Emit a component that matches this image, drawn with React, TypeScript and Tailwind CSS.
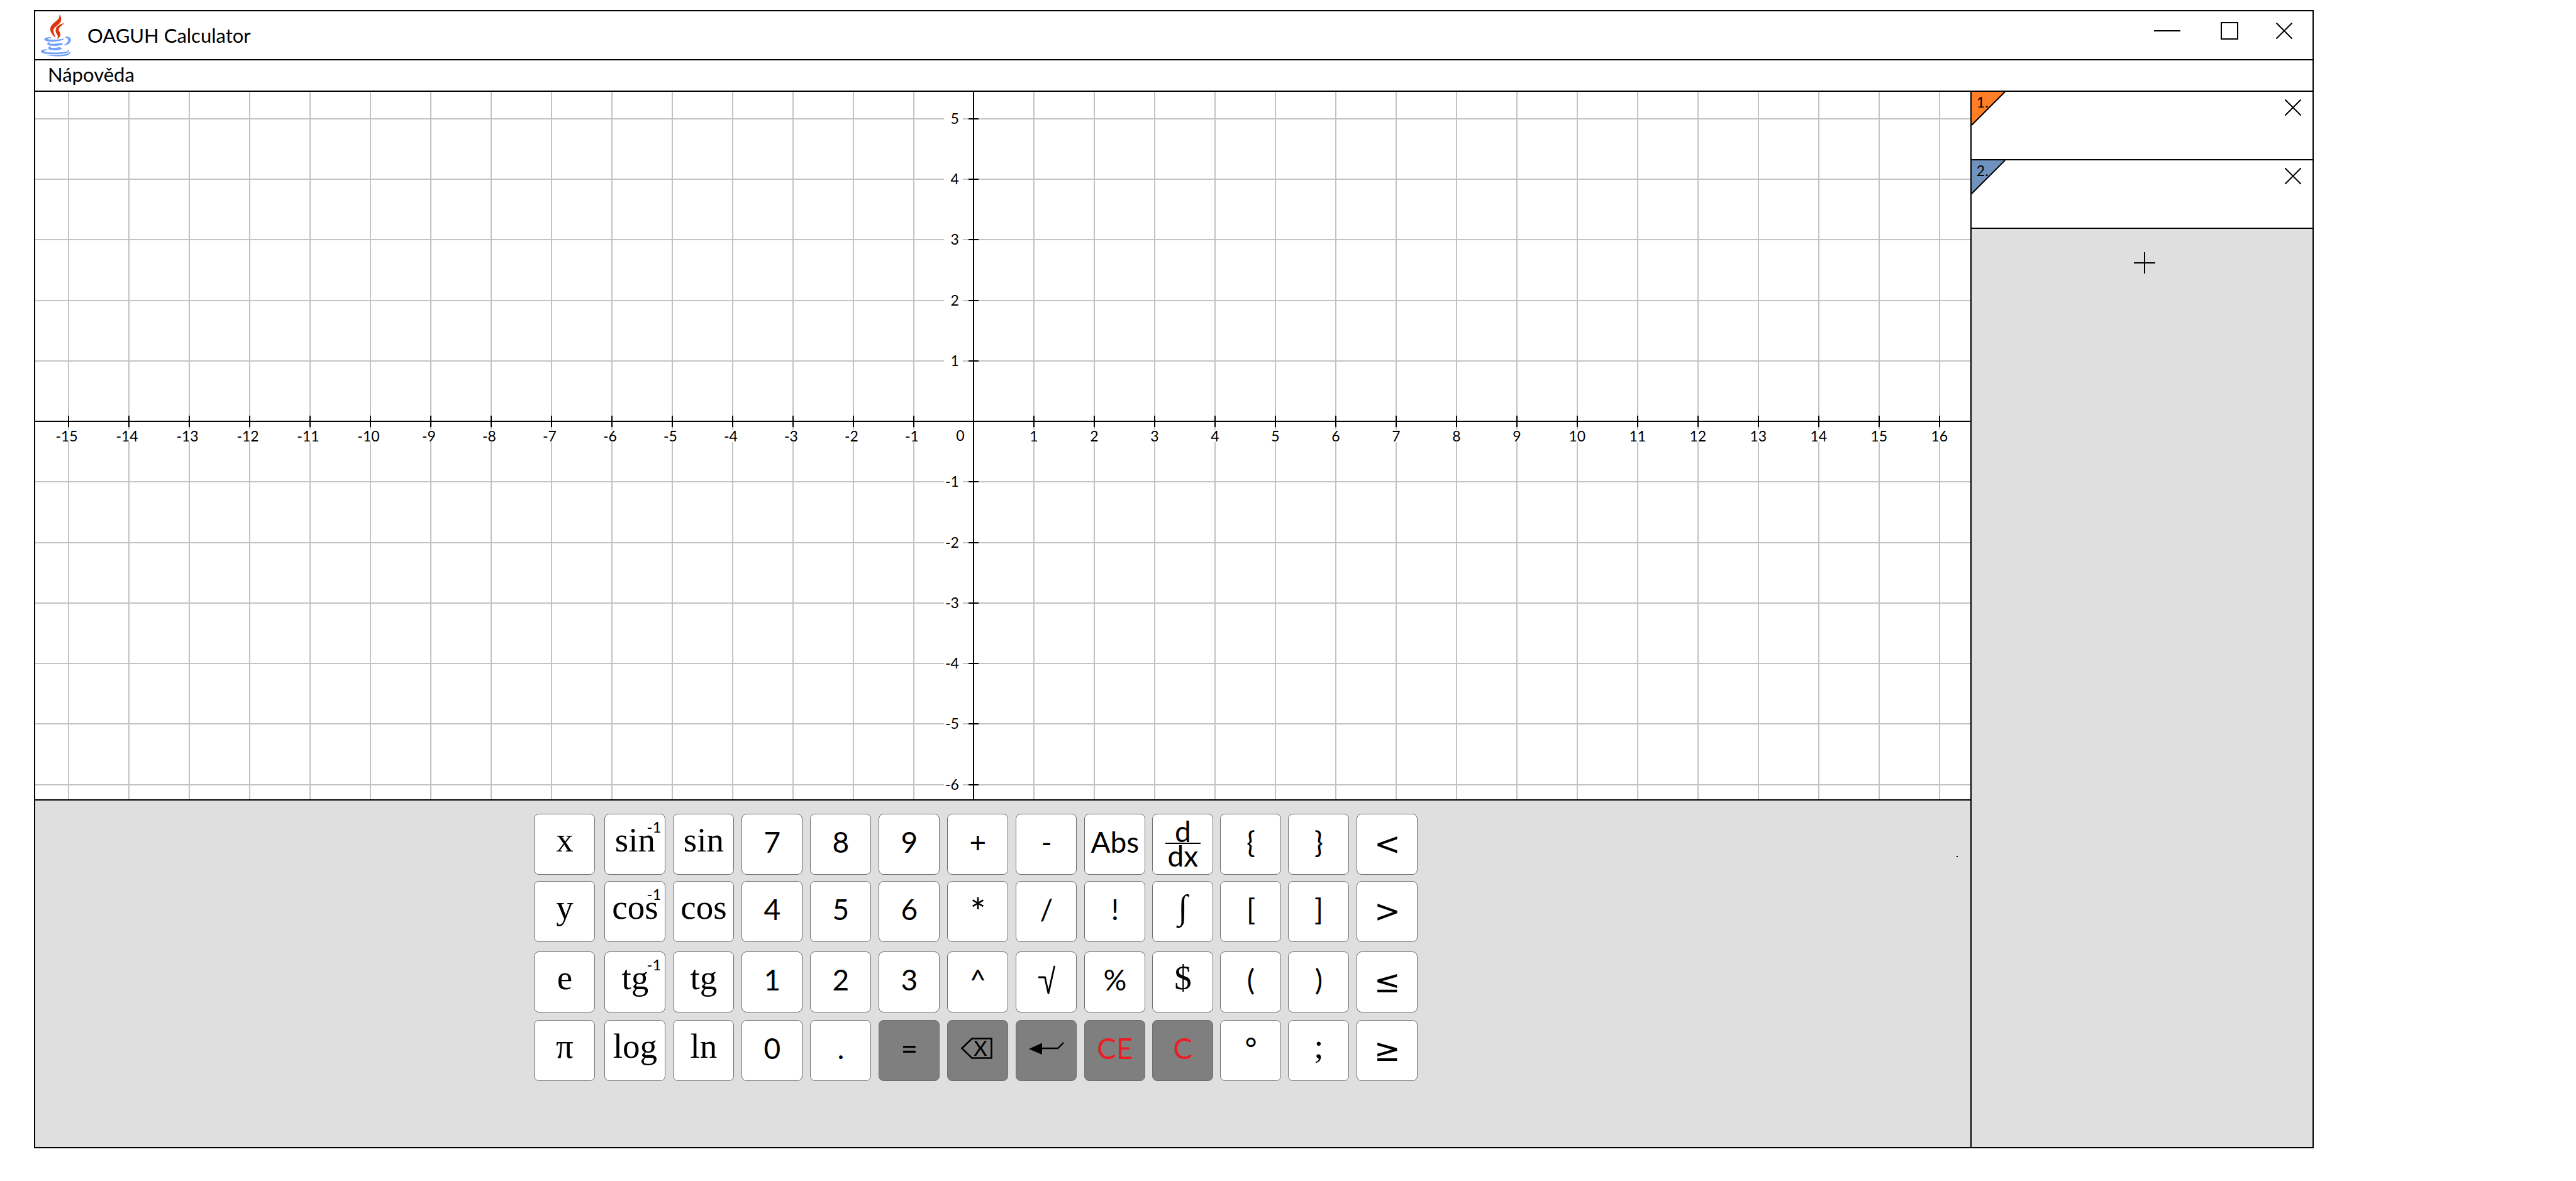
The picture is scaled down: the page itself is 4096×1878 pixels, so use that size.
import React from "react";

const PLOT_W = 3077;
const PLOT_H = 1125;
const ORIGIN_X = 1492;
const ORIGIN_Y = 524;
const STEP = 96;

const range = (from: number, to: number) =>
  Array.from({ length: to - from + 1 }, (_, i) => from + i);

const xOf = (k: number) => {
  if (k === 0) return ORIGIN_X;
  return k < 0 ? 1397 + (k + 1) * STEP : 1588 + (k - 1) * STEP;
};
const yOf = (k: number) => Math.round(ORIGIN_Y - k * 96.25);

const X_TICKS = range(-15, 16).filter((k) => k !== 0);
const Y_TICKS = range(-6, 5).filter((k) => k !== 0);

function Plot() {
  return (
    <svg
      viewBox={`0 0 ${PLOT_W} ${PLOT_H}`}
      className="block h-auto w-full bg-white"
      role="img"
      aria-label="Graf"
    >
      <g fill="#c3c3c3" shapeRendering="crispEdges">
        {X_TICKS.map((k) => (
          <rect key={k} x={xOf(k) - 1} y={0} width={2} height={PLOT_H} />
        ))}
        {Y_TICKS.map((k) => (
          <rect key={k} x={0} y={yOf(k) - 1} width={PLOT_W} height={2} />
        ))}
      </g>
      <g fill="#ffffff" shapeRendering="crispEdges">
        {X_TICKS.map((k) => (
          <rect key={k} x={xOf(k) - 16} y={537} width={32} height={20} />
        ))}
        {Y_TICKS.map((k) => (
          <rect key={k} x={1445} y={yOf(k) - 11} width={30} height={22} />
        ))}
      </g>
      <g fill="#000000" shapeRendering="crispEdges">
        <rect x={0} y={ORIGIN_Y - 1} width={PLOT_W} height={2} />
        <rect x={ORIGIN_X - 1} y={0} width={2} height={PLOT_H} />
        {X_TICKS.map((k) => (
          <rect key={k} x={xOf(k) - 1} y={ORIGIN_Y - 9} width={2} height={18} />
        ))}
        {Y_TICKS.map((k) => (
          <rect key={k} x={ORIGIN_X - 8} y={yOf(k) - 1} width={16} height={2} />
        ))}
      </g>
      <g className="text-[23px]" fill="#000000">
        {X_TICKS.map((k) => (
          <text key={k} x={k < 0 ? xOf(k) - 3 : xOf(k)} y={556} textAnchor="middle">
            {k}
          </text>
        ))}
        <text x={1471} y={555} textAnchor="middle">
          0
        </text>
        {Y_TICKS.map((k) => (
          <text key={k} x={1469} y={yOf(k) + 8} textAnchor="end">
            {k}
          </text>
        ))}
      </g>
    </svg>
  );
}

function JavaLogo() {
  return (
    <svg viewBox="60 20 270 374" className="h-[67px] w-[48px]" aria-hidden="true">
      <g fill="#dc360c">
        <path d="M229 21C240 36 244 55 241 72C236 96 216 110 197 124C178 138 170 153 173 171C176 190 184 205 190 219L186 222C164 203 147 180 144 157C142 131 156 111 178 93C205 72 228 58 226 23Z" />
        <path d="M263 98L264 103C247 114 228 129 221 145C215 158 224 168 231 180C240 197 236 213 211 237L208 235C213 217 212 207 203 195C193 181 188 164 194 146C203 121 231 106 263 98Z" />
      </g>
      <g fill="#73a1fb">
        <path d="M152 222L153 228C140 229 126 232 122 236C120 240 132 242 150 243C190 245 225 243 266 234C267 239 263 243 255 247C225 260 172 267 128 261C101 257 86 247 91 237C97 225 127 220 152 222Z" />
        <path d="M273 225C282 217 298 215 312 221C328 228 333 245 326 260C317 280 292 292 268 294L267 290C286 278 299 267 303 253C306 238 297 227 273 225Z" />
        <path d="M135 267L140 270C134 276 138 280 150 280C178 281 208 278 238 271C245 275 246 280 257 282L257 287C227 297 190 302 153 299C127 297 115 288 117 278C119 270 127 267 135 267Z" />
        <path d="M147 304L149 308C144 313 148 317 163 317C187 318 210 314 231 309C236 315 241 320 252 323C246 330 236 333 222 336C192 341 158 340 140 334C127 330 123 320 127 312C130 307 138 303 147 304Z" />
        <path d="M118 330L120 334C105 337 94 341 91 346C88 352 108 357 140 358C188 360 248 357 289 350C301 347 304 342 301 334L305 333C313 339 314 347 308 353C292 369 218 376 163 374C104 373 61 364 60 350C59 337 88 330 118 330Z" />
        <path d="M322 352L325 357C318 375 303 386 280 389C230 396 160 393 114 383L115 378C165 383 232 382 273 375C300 370 313 362 322 352Z" />
      </g>
    </svg>
  );
}

function Cross() {
  return (
    <svg viewBox="0 0 26 26" className="size-[26px]" stroke="#000" strokeWidth="2" strokeLinecap="round" aria-hidden="true">
      <path d="M1 1L25 25M25 1L1 25" />
    </svg>
  );
}

function TitleBar() {
  return (
    <header className="flex h-[78px] items-center border-b-2 border-black pr-8 pl-[9px]">
      <JavaLogo />
      <h1 className="ml-[26px] flex-1 text-[31px] leading-[38px]">OAGUH Calculator</h1>
      <div className="flex items-center pb-[14px]">
        <button type="button" aria-label="Minimalizovat" className="flex h-7 w-[42px] items-center">
          <span className="h-[2px] w-full bg-black" />
        </button>
        <button type="button" aria-label="Maximalizovat" className="ml-16 size-7 border-2 border-black" />
        <button type="button" aria-label="Zavřít" className="ml-[60px]">
          <Cross />
        </button>
      </div>
    </header>
  );
}

function FunctionRow({ n, fill }: { n: number; fill: string }) {
  return (
    <div className="relative flex h-[109px] items-start justify-end border-b-2 border-black bg-white">
      <svg viewBox="0 0 54 54" className="absolute top-0 left-0 size-[54px]" aria-hidden="true">
        <path d="M0 0H53L0 53Z" fill={fill} />
        <path d="M53 0L0 53" stroke="#000" strokeWidth="2" />
      </svg>
      <label htmlFor={`fn-${n}`} className="absolute top-[2px] left-2 text-[23px] leading-[28px]">
        {n}.
      </label>
      <input id={`fn-${n}`} type="text" className="h-full min-w-0 flex-1 bg-transparent pl-16 text-[31px] outline-none" />
      <button type="button" aria-label={`Odstranit funkci ${n}`} className="mt-3 mr-[18px]">
        <Cross />
      </button>
    </div>
  );
}

function RootIcon() {
  return (
    <svg viewBox="0 0 28 46" className="h-[46px] w-[28px]" fill="none" stroke="#000" strokeWidth="2.8" strokeLinecap="round" strokeLinejoin="round" aria-hidden="true">
      <path d="M2 19H11.500L17 44.500L26.500 2" />
    </svg>
  );
}

function BackspaceIcon() {
  return (
    <svg viewBox="0 0 50 34" className="mr-1 h-[34px] w-[50px] overflow-visible" aria-hidden="true">
      <path d="M1.500 17L17.500 1.500H48.500V32.500H17.500Z" fill="none" stroke="#000" strokeWidth="2.600" />
      <text x="31" y="29" textAnchor="middle" fontSize="33">
        X
      </text>
    </svg>
  );
}

function EnterIcon() {
  return (
    <svg viewBox="0 0 56 20" className="h-[20px] w-[56px]" aria-hidden="true">
      <path d="M0 11L21 1.500V20Z" />
      <path d="M20 10H46L54.500 1.500" fill="none" stroke="#000" strokeWidth="2.400" strokeLinecap="round" />
    </svg>
  );
}

function Derivative() {
  return (
    <span className="flex flex-col items-center pt-1">
      <span className="leading-[37px]">d</span>
      <span className="h-[2px] w-14 bg-black" />
      <span className="leading-[37px]">dx</span>
    </span>
  );
}

type Style = "sans" | "serif" | "relation" | "star";

type Key = {
  name: string;
  style: Style;
  face?: React.ReactNode;
  inverse?: boolean;
  dark?: boolean;
  red?: boolean;
};

const FONTS: Record<Style, string> = {
  sans: "text-[46px] leading-[56px] pb-[6px]",
  serif: "font-['Liberation_Serif',serif] text-[55px] leading-[64px] pb-3",
  relation: "font-['DejaVu_Sans',sans-serif] text-[50px] leading-[60px]",
  star: "text-[60px] leading-[72px]",
};

const n = (name: string): Key => ({ name, style: "sans" });
const s = (name: string): Key => ({ name, style: "serif" });
const inv = (name: string): Key => ({ name, style: "serif", inverse: true });
const rel = (name: string): Key => ({ name, style: "relation" });
const icon = (name: string, face: React.ReactNode, dark = false): Key => ({
  name,
  style: "sans",
  face,
  dark,
});
const clear = (name: string): Key => ({ name, style: "sans", dark: true, red: true });

const KEYS: Key[] = [
  s("x"), inv("sin"), s("sin"), n("7"), n("8"), n("9"), n("+"), n("-"), n("Abs"),
  icon("d/dx", <Derivative />), n("{"), n("}"), rel("<"),

  s("y"), inv("cos"), s("cos"), n("4"), n("5"), n("6"), { name: "*", style: "star" },
  n("/"), n("!"), s("∫"), n("["), n("]"), rel(">"),

  s("e"), inv("tg"), s("tg"), n("1"), n("2"), n("3"), n("^"),
  icon("Odmocnina", <RootIcon />), n("%"), s("$"), n("("), n(")"), rel("≤"),

  s("π"), s("log"), s("ln"), n("0"), n("."), { name: "=", style: "sans", dark: true },
  icon("Smazat znak", <BackspaceIcon />, true), icon("Potvrdit", <EnterIcon />, true),
  clear("CE"), clear("C"), n("°"), s(";"), rel("≥"),
];

function KeyButton({ k }: { k: Key }) {
  return (
    <button
      type="button"
      aria-label={k.face ? k.name : undefined}
      className={`relative flex size-[97px] items-center justify-center rounded-lg border border-[#6e6e6e] ${
        k.dark ? "bg-[#7f7f7f]" : "bg-white"
      } ${k.red ? "text-[#ed1c24]" : "text-black"} ${FONTS[k.style]}`}
    >
      {k.face ?? k.name}
      {k.inverse && (
        <sup className="absolute top-2 right-[6px] font-['Lato',sans-serif] text-[24px] leading-[24px]">-1</sup>
      )}
    </button>
  );
}

function Keypad() {
  return (
    <section
      aria-label="Klávesnice"
      className="relative flex flex-1 justify-center border-t-2 border-black bg-[#dfdfdf] pt-[21px] pr-[85px] pb-[105px]"
    >
      <div className="grid grid-cols-[112px_repeat(7,109px)_108px_108px_108px_109px_97px] grid-rows-[107px_112px_109px_97px]">
        {KEYS.map((k) => (
          <KeyButton key={`${k.name}${k.inverse ? "-1" : ""}`} k={k} />
        ))}
      </div>
      <span className="absolute top-[88px] right-5 size-[2px] bg-black" />
    </section>
  );
}

export default function App() {
  return (
    <div className="min-h-screen bg-white pt-4 pl-[54px] font-['Lato',sans-serif] text-black">
      <div className="flex w-[89.68%] flex-col border-2 border-black">
        <TitleBar />
        <nav className="flex h-[50px] items-center border-b-2 border-black pb-1 pl-5">
          <button type="button" className="text-[31px] leading-[38px]">
            Nápověda
          </button>
        </nav>
        <div className="flex">
          <main className="flex min-w-0 flex-1 flex-col">
            <Plot />
            <Keypad />
          </main>
          <aside className="w-[544px] shrink-0 border-l-2 border-black bg-[#dfdfdf]">
            <FunctionRow n={1} fill="#ff7f27" />
            <FunctionRow n={2} fill="#7092be" />
            <button type="button" aria-label="Přidat funkci" className="flex h-[107px] w-full items-center justify-center pl-2">
              <svg viewBox="0 0 34 34" className="size-[34px]" stroke="#000" strokeWidth="2" aria-hidden="true">
                <path d="M17 0V34M0 17H34" />
              </svg>
            </button>
          </aside>
        </div>
      </div>
    </div>
  );
}
